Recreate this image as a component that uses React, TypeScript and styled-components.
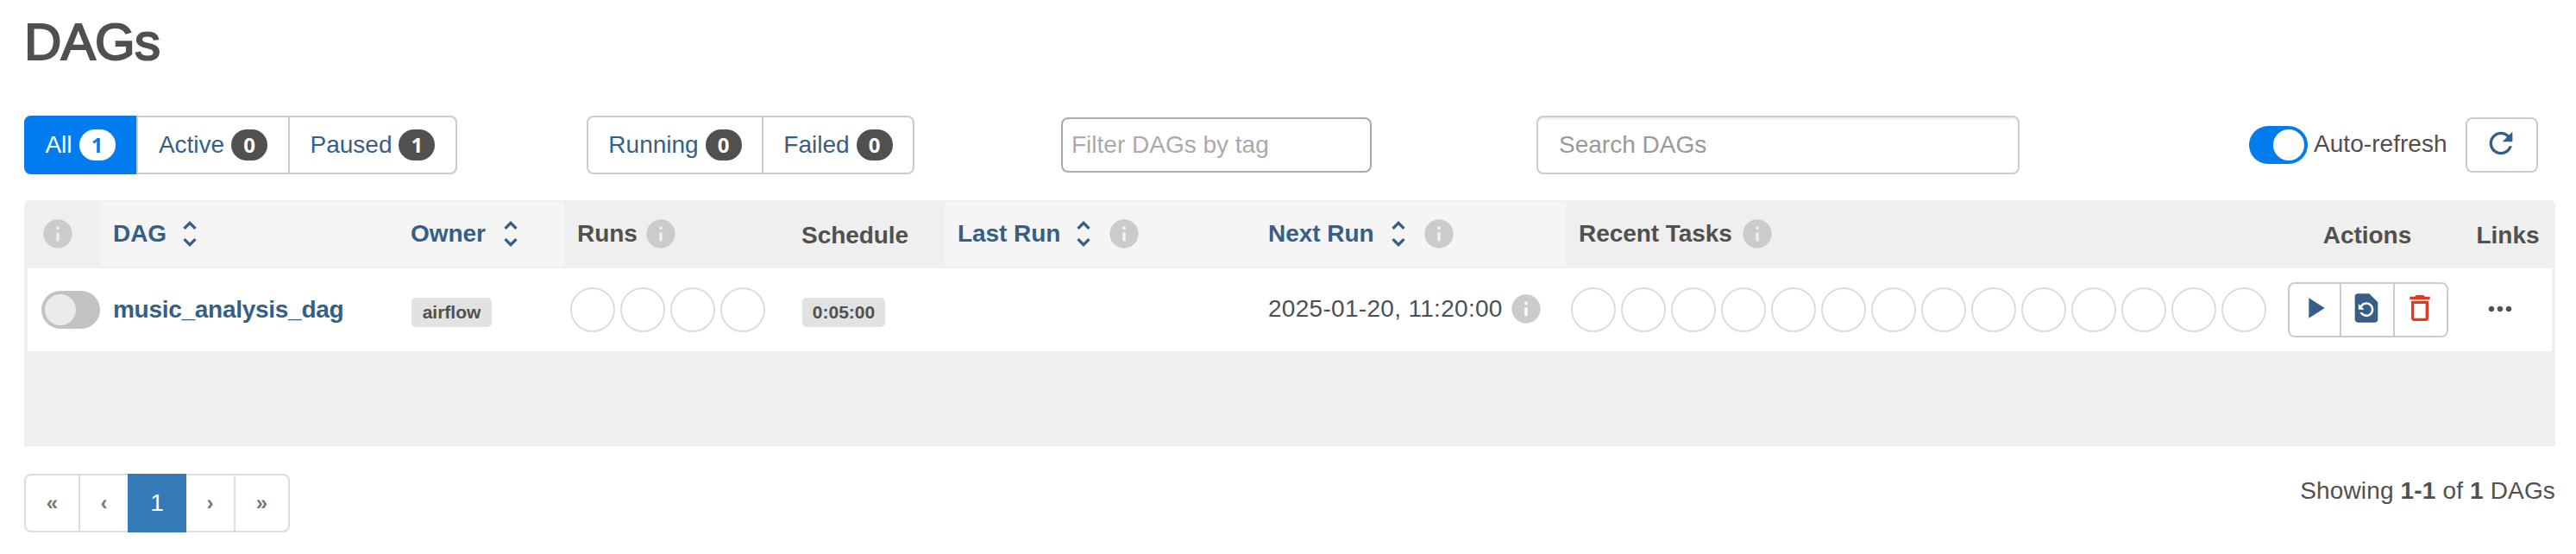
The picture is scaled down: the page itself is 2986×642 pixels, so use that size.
import React from "react";
import styled, { createGlobalStyle } from "styled-components";

const GlobalStyle = createGlobalStyle`
  * { box-sizing: border-box; }
  body {
    margin: 0;
    background: #fff;
    color: #51504f;
    font-family: "Liberation Sans", Arial, sans-serif;
    font-size: 28px;
    line-height: 40px;
  }
`;

const Page = styled.main`
  display: flex;
  flex-direction: column;
  width: 2986px;
  height: 642px;
  padding: 0 24px 0 28px;
  white-space: nowrap;
`;

const Title = styled.h2`
  margin: 16px 0 50px;
  height: 66px;
  line-height: 66px;
  font-size: 60px;
  font-weight: 400;
  letter-spacing: -0.7px;
  -webkit-text-stroke: 2px #51504f;
`;

const Toolbar = styled.div`
  display: flex;
  align-items: center;
  height: 70px;
  margin-top: 1px;
`;

const ButtonGroup = styled.div<{ $ml?: number }>`
  display: flex;
  height: 68px;
  margin-left: ${(p) => p.$ml ?? 0}px;
  border: 2px solid #ccc;
  border-radius: 8px;
`;

const FilterButton = styled.a<{ $w: number; $active?: boolean }>`
  display: flex;
  align-items: center;
  justify-content: center;
  gap: 8px;
  width: ${(p) => p.$w}px;
  color: ${(p) => (p.$active ? "#fff" : "#355f87")};
  background: ${(p) => (p.$active ? "#017cee" : "transparent")};
  ${(p) => p.$active && "margin: -2px 0 -2px -2px; border-radius: 8px 0 0 8px;"}
  & + & {
    border-left: 2px solid #ccc;
  }
`;

const Badge = styled.span<{ $active?: boolean }>`
  width: 42px;
  height: 36px;
  border-radius: 18px;
  background: ${(p) => (p.$active ? "#fff" : "#51504f")};
  color: ${(p) => (p.$active ? "#017cee" : "#fff")};
  font: 700 24px/35px "Noto Sans", "Open Sans", sans-serif;
  text-align: center;
`;

const Field = styled.input<{ $w: number; $ml: number; $search?: boolean }>`
  width: ${(p) => p.$w}px;
  height: ${(p) => (p.$search ? 68 : 64)}px;
  margin: 0 0 0 ${(p) => p.$ml}px;
  padding: 0 ${(p) => (p.$search ? 24 : 10)}px;
  border: 2px solid ${(p) => (p.$search ? "#ccc" : "#aaa")};
  border-radius: 8px;
  outline: none;
  font: inherit;
  background: #fff;
  box-shadow: ${(p) => (p.$search ? "inset 0 2px 2px rgba(0, 0, 0, 0.075)" : "none")};
  &::placeholder {
    color: ${(p) => (p.$search ? "#999" : "#aaa")};
    opacity: 1;
  }
`;

const Switch = styled.span<{ $on?: boolean }>`
  display: flex;
  flex: none;
  justify-content: ${(p) => (p.$on ? "flex-end" : "flex-start")};
  width: 68px;
  height: 44px;
  padding: 4px;
  border-radius: 22px;
  background: ${(p) => (p.$on ? "#017cee" : "#c4c2c1")};
  &::after {
    content: "";
    width: 36px;
    height: 36px;
    border-radius: 50%;
    background: ${(p) => (p.$on ? "#fffdfc" : "#ebebeb")};
  }
`;

const RefreshArea = styled.div`
  display: flex;
  align-items: center;
  margin-left: auto;
  margin-right: 20px;
`;

const RefreshLabel = styled.span`
  width: 176px;
  margin-left: 7px;
  padding-bottom: 3px;
  letter-spacing: 0.05px;
`;

const RefreshButton = styled.button`
  display: flex;
  align-items: center;
  justify-content: center;
  width: 84px;
  height: 64px;
  padding: 0 2px 5px 0;
  border: 2px solid #ccc;
  border-radius: 8px;
  background: #fff;
  color: #355f87;
`;

const Table = styled.section`
  height: 285px;
  margin-top: 29px;
  background: #efefef;
  border-radius: 6px 6px 0 0;
`;

const columns = "88px 345px 193px 260px 181px 360px 360px 821px 217px 109px";

const HeadRow = styled.div`
  display: grid;
  grid-template-columns: ${columns};
  height: 79px;
  padding: 2px 0;
`;

const HeadCell = styled.div<{ $sortable?: boolean; $low?: boolean; $center?: boolean }>`
  display: flex;
  align-items: center;
  justify-content: ${(p) => (p.$center ? "center" : "flex-start")};
  padding: 0 ${(p) => (p.$center ? 1 : 0)}px ${(p) => (p.$low ? 0 : 2)}px ${(p) => (p.$center ? 0 : 15)}px;
  padding-top: ${(p) => (p.$low ? 3 : 0)}px;
  background: ${(p) => (p.$sortable ? "#f5f5f5" : "transparent")};
  color: ${(p) => (p.$sortable ? "#355f87" : "#51504f")};
  font-weight: 700;
  letter-spacing: -0.05px;
`;

const BodyRow = styled.div`
  display: grid;
  grid-template-columns: ${columns};
  align-items: center;
  height: 96px;
  margin: 0 4px;
  background: #fff;
  & > :first-child {
    margin-left: -4px;
  }
`;

const Cell = styled.div<{ $pl?: number }>`
  display: flex;
  align-items: center;
  margin-left: -4px;
  padding-left: ${(p) => p.$pl ?? 16}px;
`;

const DagLink = styled.a`
  margin-left: -1px;
  color: #355f87;
  font-weight: 700;
  letter-spacing: -0.28px;
`;

const Tag = styled.span<{ $w: number }>`
  width: ${(p) => p.$w}px;
  height: 34px;
  margin-top: 6px;
  border-radius: 5px;
  background: #e2e2e2;
  font-size: 21px;
  font-weight: 700;
  line-height: 33px;
  text-align: center;
`;

const Circles = styled.div`
  display: flex;
  gap: 6px;
`;

const Circle = styled.span`
  width: 52px;
  height: 52px;
  border: 2px solid #ddd;
  border-radius: 50%;
`;

const NextRun = styled.div`
  display: flex;
  align-items: center;
  padding-bottom: 3px;
`;

const DateText = styled.time`
  width: 279px;
  letter-spacing: 0.3px;
`;

const Actions = styled.div`
  display: flex;
  height: 64px;
  border: 2px solid #ccc;
  border-radius: 8px;
`;

const ActionButton = styled.button<{ $w: number; $danger?: boolean }>`
  display: flex;
  justify-content: center;
  width: ${(p) => p.$w}px;
  padding: 8px 0 0;
  border: 0;
  background: none;
  color: ${(p) => (p.$danger ? "#e43921" : "#355f87")};
  & + & {
    padding-right: 2px;
    border-left: 2px solid #ccc;
  }
`;

const LinksMenu = styled.div`
  padding-bottom: 2px;
`;

const Footer = styled.footer`
  display: flex;
  justify-content: space-between;
  margin-top: 32px;
`;

const Pager = styled.nav`
  display: flex;
  height: 68px;
  border: 2px solid #ddd;
  border-radius: 8px;
`;

const PageItem = styled.a<{ $w: number; $active?: boolean; $divider?: boolean }>`
  width: ${(p) => p.$w}px;
  font-size: ${(p) => (p.$active ? 28 : 24)}px;
  font-weight: ${(p) => (p.$active ? 400 : 700)};
  line-height: 64px;
  text-align: center;
  color: ${(p) => (p.$active ? "#fff" : "#777")};
  ${(p) => p.$divider && "border-left: 2px solid #ddd;"}
  ${(p) => p.$active && "background: #337ab7; margin: -2px 0; padding: 2px 0;"}
`;

const Summary = styled.div`
  letter-spacing: 0.15px;
`;

const Svg = styled.svg<{ $ml?: number }>`
  flex: none;
  display: block;
  width: 40px;
  height: 40px;
  margin-left: ${(p) => p.$ml ?? 0}px;
  fill: currentColor;
`;

const InfoSvg = styled(Svg)`
  color: #cbcbcb;
`;

const paths = {
  info: "M12 2C6.48 2 2 6.48 2 12s4.48 10 10 10 10-4.48 10-10S17.52 2 12 2zm1 15h-2v-6h2v6zm0-8h-2V7h2v2z",
  sort: "M12 5.83L15.17 9l1.41-1.41L12 3 7.41 7.59 8.83 9 12 5.83zm0 12.34L8.83 15l-1.41 1.41L12 21l4.59-4.59L15.17 15 12 18.17z",
  refresh:
    "M17.65 6.35C16.2 4.9 14.21 4 12 4c-4.42 0-7.99 3.58-7.99 8s3.57 8 7.99 8c3.73 0 6.84-2.55 7.73-6h-2.08c-.82 2.33-3.04 4-5.65 4-3.31 0-6-2.69-6-6s2.69-6 6-6c1.66 0 3.14.69 4.22 1.78L13 11h7V4l-2.35 2.35z",
  play: "M8 5v14l11-7z",
  restore:
    "M14 2H6c-1.1 0-1.99.9-1.99 2L4 20c0 1.1.89 2 1.99 2H18c1.1 0 2-.9 2-2V8l-6-6zm-2 16c-2.05 0-3.81-1.24-4.58-3h1.71c.63.9 1.68 1.5 2.87 1.5 1.93 0 3.5-1.57 3.5-3.5S13.93 9.5 12 9.5c-1.35 0-2.52.78-3.1 1.9l1.6 1.6h-4V9l1.3 1.3C8.69 8.92 10.23 8 12 8c2.76 0 5 2.24 5 5s-2.24 5-5 5z",
  trash:
    "M6 19c0 1.1.9 2 2 2h8c1.1 0 2-.9 2-2V7H6v12zM8 9h8v10H8V9zm7.5-5l-1-1h-5l-1 1H5v2h14V4h-3.5z",
  more: "M6 10c-1.1 0-2 .9-2 2s.9 2 2 2 2-.9 2-2-.9-2-2-2zm12 0c-1.1 0-2 .9-2 2s.9 2 2 2 2-.9 2-2-.9-2-2-2zm-6 0c-1.1 0-2 .9-2 2s.9 2 2 2 2-.9 2-2-.9-2-2-2z",
};

const Icon = ({ name, ml }: { name: keyof typeof paths; ml?: number }) => (
  <Svg $ml={ml} viewBox="0 0 24 24">
    <path d={paths[name]} />
  </Svg>
);

const Info = ({ ml }: { ml?: number }) => (
  <InfoSvg $ml={ml} viewBox="0 0 24 24">
    <path d={paths.info} />
  </InfoSvg>
);

const CircleRow = ({ count }: { count: number }) => (
  <Circles>
    {Array.from({ length: count }, (_, i) => (
      <Circle key={i} />
    ))}
  </Circles>
);

export default function App() {
  return (
    <Page>
      <GlobalStyle />
      <Title>DAGs</Title>
      <Toolbar>
        <ButtonGroup>
          <FilterButton $w={130} $active>
            All <Badge $active>1</Badge>
          </FilterButton>
          <FilterButton $w={176}>
            Active <Badge>0</Badge>
          </FilterButton>
          <FilterButton $w={194}>
            Paused <Badge>1</Badge>
          </FilterButton>
        </ButtonGroup>
        <ButtonGroup $ml={150}>
          <FilterButton $w={201}>
            Running <Badge>0</Badge>
          </FilterButton>
          <FilterButton $w={175}>
            Failed <Badge>0</Badge>
          </FilterButton>
        </ButtonGroup>
        <Field $w={360} $ml={170} placeholder="Filter DAGs by tag" />
        <Field $w={560} $ml={191} $search placeholder="Search DAGs" />
        <RefreshArea>
          <Switch $on />
          <RefreshLabel>Auto-refresh</RefreshLabel>
          <RefreshButton>
            <Icon name="refresh" />
          </RefreshButton>
        </RefreshArea>
      </Toolbar>

      <Table>
        <HeadRow>
          <HeadCell>
            <Info ml={4} />
          </HeadCell>
          <HeadCell $sortable>
            DAG
            <Icon name="sort" ml={7} />
          </HeadCell>
          <HeadCell $sortable>
            Owner
            <Icon name="sort" ml={9} />
          </HeadCell>
          <HeadCell>
            Runs
            <Info ml={7} />
          </HeadCell>
          <HeadCell $low>Schedule</HeadCell>
          <HeadCell $sortable>
            Last Run
            <Icon name="sort" ml={7} />
            <Info ml={7} />
          </HeadCell>
          <HeadCell $sortable>
            Next Run
            <Icon name="sort" ml={8} />
            <Info ml={7} />
          </HeadCell>
          <HeadCell>
            Recent Tasks
            <Info ml={9} />
          </HeadCell>
          <HeadCell $low $center>
            Actions
          </HeadCell>
          <HeadCell $low $center>
            Links
          </HeadCell>
        </HeadRow>
        <BodyRow>
          <Cell $pl={20}>
            <Switch />
          </Cell>
          <Cell>
            <DagLink>music_analysis_dag</DagLink>
          </Cell>
          <Cell>
            <Tag $w={93}>airflow</Tag>
          </Cell>
          <Cell $pl={7}>
            <CircleRow count={4} />
          </Cell>
          <Cell>
            <Tag $w={96}>0:05:00</Tag>
          </Cell>
          <Cell />
          <Cell $pl={15}>
            <NextRun>
              <DateText>2025-01-20, 11:20:00</DateText>
              <Info />
            </NextRun>
          </Cell>
          <Cell $pl={6}>
            <CircleRow count={14} />
          </Cell>
          <Cell>
            <Actions>
              <ActionButton $w={58}>
                <Icon name="play" />
              </ActionButton>
              <ActionButton $w={62}>
                <Icon name="restore" />
              </ActionButton>
              <ActionButton $w={62} $danger>
                <Icon name="trash" />
              </ActionButton>
            </Actions>
          </Cell>
          <Cell $pl={25}>
            <LinksMenu>
              <Icon name="more" />
            </LinksMenu>
          </Cell>
        </BodyRow>
      </Table>

      <Footer>
        <Pager>
          <PageItem $w={61}>«</PageItem>
          <PageItem $w={57} $divider>
            ‹
          </PageItem>
          <PageItem $w={68} $active>
            1
          </PageItem>
          <PageItem $w={55}>›</PageItem>
          <PageItem $w={63} $divider>
            »
          </PageItem>
        </Pager>
        <Summary>
          Showing <b>1-1</b> of <b>1</b> DAGs
        </Summary>
      </Footer>
    </Page>
  );
}
